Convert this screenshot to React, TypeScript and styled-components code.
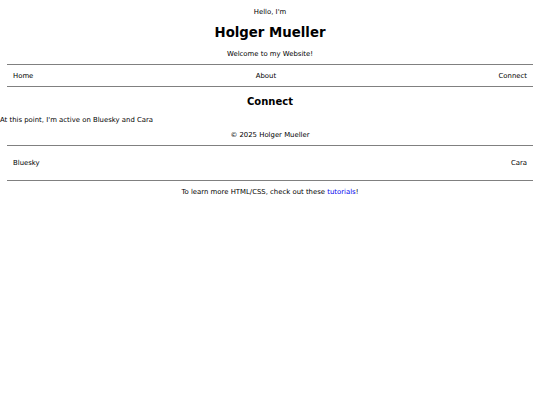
import React from 'react'
import styled, { createGlobalStyle } from 'styled-components'

const GlobalStyle = createGlobalStyle`
  html, body {
    margin: 0;
    padding: 0;
    background: #ffffff;
  }
  body {
    font-family: 'DejaVu Sans', Verdana, sans-serif;
    font-size: 6.9px;
    color: #000000;
  }
`

const Page = styled.div`
  display: flex;
  flex-direction: column;
`

const Header = styled.header`
  display: flex;
  flex-direction: column;
  align-items: center;
  padding-top: 8px;
  margin-bottom: 6px;
`

const Greeting = styled.p`
  margin: 0;
  line-height: 8px;
`

const Name = styled.h1`
  margin: 9px 0 0;
  font-size: 13.3px;
  line-height: 16px;
  font-weight: bold;
`

const Tagline = styled.p`
  margin: 9px 0 0;
  line-height: 8px;
`

const Bar = styled.nav<{ $height: number }>`
  display: flex;
  justify-content: space-between;
  align-items: center;
  margin: 0 7px;
  padding: 0 6px;
  height: ${({ $height }) => $height}px;
  border-top: 1px solid #808080;
  border-bottom: 1px solid #808080;
`

const BarLink = styled.span`
  color: #000000;
`

const Section = styled.section`
  display: flex;
  flex-direction: column;
`

const SectionTitle = styled.h2`
  margin: 9px 0 0;
  text-align: center;
  font-size: 10px;
  line-height: 12px;
  font-weight: bold;
`

const Text = styled.p<{ $center?: boolean; $gap: number }>`
  margin: ${({ $gap }) => $gap}px 0 0;
  line-height: 8px;
  text-align: ${({ $center }) => ($center ? 'center' : 'left')};
`

const Footer = styled.footer`
  display: flex;
  flex-direction: column;
  margin-top: 7px;
`

const LinksBar = styled(Bar)`
  margin-top: 6px;
`

const Note = styled.p`
  margin: 7px 0 0;
  text-align: center;
  line-height: 8px;
`

const Link = styled.a`
  color: #0000ee;
  text-decoration: none;
`

export default function App() {
  return (
    <>
      <GlobalStyle />
      <Page>
        <Header>
          <Greeting>Hello, I'm</Greeting>
          <Name>Holger Mueller</Name>
          <Tagline>Welcome to my Website!</Tagline>
        </Header>
        <Bar $height={21}>
          <BarLink>Home</BarLink>
          <BarLink>About</BarLink>
          <BarLink>Connect</BarLink>
        </Bar>
        <Section>
          <SectionTitle>Connect</SectionTitle>
          <Text $gap={8}>At this point, I'm active on Bluesky and Cara</Text>
        </Section>
        <Footer>
          <Text $center $gap={0}>© 2025 Holger Mueller</Text>
          <LinksBar as="div" $height={34}>
            <BarLink>Bluesky</BarLink>
            <BarLink>Cara</BarLink>
          </LinksBar>
          <Note>
            To learn more HTML/CSS, check out these <Link href="#">tutorials</Link>!
          </Note>
        </Footer>
      </Page>
    </>
  )
}
